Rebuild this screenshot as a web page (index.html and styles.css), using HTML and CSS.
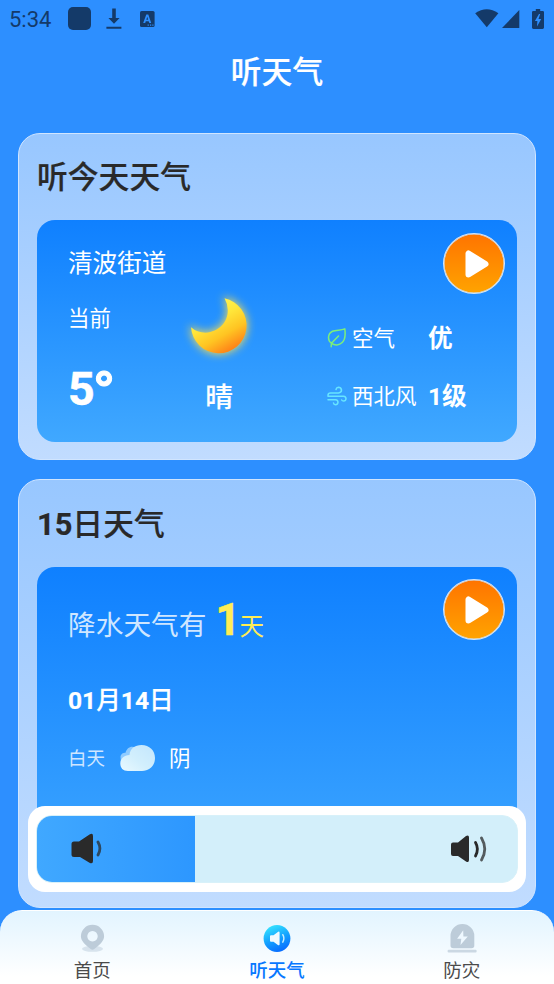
FILE: index.html
```html
<!DOCTYPE html>
<html lang="zh-CN">
<head>
<meta charset="utf-8">
<title>听天气</title>
<link rel="stylesheet" href="styles.css">
</head>
<body>
<div class="app">
  <header class="status">
    <span class="clock">5:34</span>
    <span class="app-dot"></span>
    <svg class="st-download" width="16" height="22" viewBox="0 0 16 22"><path d="M6.200 0.500h3.600v9.500h3.800L8 15.700 2.400 10h3.800zM0.400 18.700h15v2H0.400z"/></svg>
    <svg class="st-lang" width="15" height="16" viewBox="0 0 15 16"><rect width="14.600" height="16" rx="1.600"/><path class="cut" d="M3.200 12 6.300 3.600h2L11.200 12H9.300l-.6-1.700H5.800L5.200 12zM6.300 8.700h1.900l-.9-3z"/><path class="cut" d="M7.600 13.600h1.200v1.100H7.600zM10 13.600h1.200v1.100H10zM12.300 13.600h1.200v1.100h-1.200z"/></svg>
    <span class="spacer"></span>
    <svg class="st-wifi" width="24" height="19" viewBox="0 0 24 19"><path d="M0.200 4.200Q11.700-3.600 23.400 4.200L11.800 18.200z"/></svg>
    <svg class="st-cell" width="18" height="18" viewBox="0 0 18 18"><path d="M17.300 0v18H0z"/></svg>
    <svg class="st-batt" width="12" height="20" viewBox="0 0 12 20"><path d="M3.800 0h4.400v1.900h2.600Q12 1.900 12 3.200v15.400Q12 20 10.600 20H1.400Q0 20 0 18.600V3.200Q0 1.900 1.300 1.900h2.500z"/><path class="cut" d="M7 5 2.900 11.900h2.500L5 17.600 9.200 10H6.500L8.200 5z"/></svg>
  </header>
  <h1 class="title">听天气</h1>

  <main class="content">
    <section class="card today">
      <h2>听今天天气</h2>
      <div class="panel">
        <div class="panel-head">
          <span class="place">清波街道</span>
          <button class="play"><svg width="24" height="28" viewBox="0 0 24 28"><path d="M3.500 3.500v21L20.500 14z"/></svg></button>
        </div>
        <div class="weather">
          <div class="temp"><span class="label">当前</span><span class="degree">5<span class="unit">°</span></span></div>
          <div class="sky">
            <svg class="moon" width="80" height="80" viewBox="0 0 80 80">
              <defs>
                <linearGradient id="moonFill" x1="30" y1="25" x2="53" y2="65" gradientUnits="userSpaceOnUse"><stop offset="0" stop-color="#fff04a"/><stop offset=".25" stop-color="#ffe63a"/><stop offset=".62" stop-color="#ffc422"/><stop offset="1" stop-color="#ff7f17"/></linearGradient>
                <filter id="glow" x="-40%" y="-40%" width="180%" height="180%"><feGaussianBlur stdDeviation="4"/></filter>
              </defs>
              <path filter="url(#glow)" fill="#ffe14a" stroke="#ffe14a" stroke-width="2" opacity=".85" d="M44.500 13.300A27.800 27.800 0 1 1 11 42.200Q17 47.500 25.500 47.700C39 47 48 37 47.800 25Q47.500 18.500 44.500 13.300z"/>
              <path fill="url(#moonFill)" d="M44.500 13.300A27.800 27.800 0 1 1 11 42.200Q17 47.500 25.500 47.700C39 47 48 37 47.800 25Q47.500 18.500 44.500 13.300z"/>
            </svg>
            <span class="sky-name">晴</span>
          </div>
          <div class="facts">
            <div class="fact">
              <svg class="leaf" width="20" height="20" viewBox="0 0 20 20"><path d="M4.200 18.700 4.400 15.200M4.400 15.200C.3 12.600.5 5.700 5.500 3.300 9 1.600 13.500 2.700 17.800.9 18.600 6.500 18.200 11.500 15.200 14.600 12.300 17.500 7.700 17.800 4.400 15.200L11.500 8"/></svg>
              <span class="name">空气</span><span class="value">优</span>
            </div>
            <div class="fact">
              <svg class="wind" width="20" height="20" viewBox="0 0 20 20"><path d="M1 10.300V9.200Q1 7 3.500 7H11.500Q14.500 6.700 14.500 4 14 1.300 11.300 1.300 9.200 1.600 9 3.600M1 10.300H16.500Q19 10.500 19 12.800 18.800 15 16.600 15 15.200 15 14.700 14M1 13.700H8.500Q11 14 11 16.400 10.700 18.800 8.500 18.800 6.700 18.600 6.500 17"/></svg>
              <span class="name">西北风</span><span class="value">1级</span>
            </div>
          </div>
        </div>
      </div>
    </section>

    <section class="card forecast">
      <h2><b>15</b>日天气</h2>
      <div class="panel">
        <div class="panel-head">
          <span class="rain">降水天气有<b>1</b><i>天</i></span>
          <button class="play"><svg width="24" height="28" viewBox="0 0 24 28"><path d="M3.500 3.500v21L20.500 14z"/></svg></button>
        </div>
        <div class="date"><b>01</b>月<b>14</b>日</div>
        <div class="day">
          <span class="part">白天</span>
          <svg class="cloud" width="36" height="28" viewBox="0 0 36 28">
            <defs><linearGradient id="cloudFill" x1="0" y1="1" x2="1" y2="0"><stop offset="0" stop-color="#e9f9ff"/><stop offset=".45" stop-color="#d2effd"/><stop offset="1" stop-color="#c3e6fd"/></linearGradient></defs>
            <path fill="#8fcbff" d="M.5 13C.5 10 3 8.800 5.500 8.700 7 3.500 11.500 1.200 16 4L13 16 1 18z"/>
            <path fill="url(#cloudFill)" d="M8 27C3 27 .3 24 .3 19.500.3 14.500 4 11.500 9.500 11 10 4.500 15 1 21.500 1 29.500 1 35 6.500 35 14S29.500 27 22 27z"/>
          </svg>
          <span class="state">阴</span>
        </div>
      </div>
    </section>

    <div class="volume">
      <div class="track">
        <div class="level">
          <svg width="32" height="32" viewBox="0 0 32 32"><path class="horn" d="M3 8.500H8L18.500 1.500Q22 -.5 22 3V28Q22 31.500 18.500 29.800L9 24H3Q.5 24 .5 21.500V11Q.5 8.500 3 8.500z"/><path class="wave" d="M27 9Q30.800 15.500 27 22"/></svg>
        </div>
        <svg class="loud" width="38" height="30" viewBox="0 0 38 30"><path class="horn" d="M3 8.500H8L16 2Q19 .5 19 3.500V26Q19 29 16 27.500L8 22H3Q1 22 1 20V10.500Q1 8.500 3 8.500z"/><path class="wave near" d="M25.500 8.500Q29.300 15 25.500 22"/><path class="wave" d="M31.500 4Q38 15 31.500 26"/></svg>
      </div>
    </div>
  </main>

  <nav class="tabs">
    <a class="tab">
      <svg width="30" height="30" viewBox="0 0 30 30"><g transform="translate(.5 -.7)"><ellipse cx="15" cy="25.500" rx="10.500" ry="3" fill="#d7e3ed"/><path fill="#bdccd9" fill-rule="evenodd" d="M15 1.500A11.500 11.500 0 0 1 26.600 13C26.600 18 22 21.500 16.800 25.700Q15 27 13.200 25.700C8 21.500 3.400 18 3.400 13A11.500 11.500 0 0 1 15 1.500zM15 7.800a5.200 5.200 0 1 0 .01 0z"/></g></svg>
      <span>首页</span>
    </a>
    <a class="tab active">
      <svg width="30" height="30" viewBox="0 0 30 30"><defs><linearGradient id="tabFill" x1=".2" y1="0" x2=".6" y2="1"><stop offset="0" stop-color="#37e7ff"/><stop offset=".55" stop-color="#12a0ff"/><stop offset="1" stop-color="#086cff"/></linearGradient></defs><circle cx="15" cy="14.500" r="13.400" fill="url(#tabFill)"/><g transform="translate(0 -.8)"><path fill="#effaff" d="M9 12H11.500L16.200 8.500Q17.600 8 17.600 9.500V21Q17.600 22.500 16.200 22L11.500 18.500H9Q8 18.500 8 17.500V13Q8 12 9 12z"/><path d="M20.800 11.500Q23 15.200 20.800 19" fill="none" stroke="#c5eeff" stroke-width="1.500" stroke-linecap="round"/></g></svg>
      <span>听天气</span>
    </a>
    <a class="tab">
      <svg width="30" height="30" viewBox="0 0 30 30"><g transform="translate(.3 -.5)"><path fill="#bdccd9" d="M3.200 22V12.500a11.900 11.900 0 0 1 23.800 0V22Q27 24.700 24.300 24.700H6Q3.200 24.700 3.200 22z"/><rect x=".3" y="26.300" width="29" height="2.800" rx="1" fill="#cbd8e3"/><path fill="#eef8ff" d="M15.900 6.800 9.800 15.200H14L13.200 21.500 20.500 13H16.100z"/></g></svg>
      <span>防灾</span>
    </a>
  </nav>
</div>
</body>
</html>
```
FILE: styles.css
```css
* { box-sizing: border-box; margin: 0; padding: 0; }

body {
  background: #2d8fff;
  color: #fff;
  font-family: Roboto, "Noto Sans CJK SC", sans-serif;
}

svg { display: block; flex: none; }

.app {
  display: flex;
  flex-direction: column;
  width: 554px;
  height: 984px;
  overflow: hidden;
}

.status {
  display: flex;
  align-items: center;
  height: 37px;
  padding: 0 10px 0 9px;
  color: #143a69;
  fill: #143a69;
}
.status .cut { fill: #2d8fff; }
.clock { width: 59px; font-size: 22px; line-height: 38px; padding-top: 2px; }
.app-dot { width: 23px; height: 23px; border-radius: 5px; background: #143a69; }
.st-download { margin-left: 15px; }
.st-lang { margin-left: 18px; }
.spacer { flex: 1; }
.st-cell { margin: 1px 12px 0 3px; }

.title {
  height: 96px;
  padding-top: 13px;
  font-size: 30.800px;
  font-weight: 500;
  line-height: 46px;
  text-align: center;
  -webkit-text-stroke: 0.200px;
}

.content {
  position: relative;
  display: flex;
  flex-direction: column;
  gap: 19px;
  height: 777px;
  padding: 0 18px;
}

.card {
  padding: 19px 18px 17px;
  border: 1px solid #d0e5ff;
  border-radius: 22px;
  background: linear-gradient(#98c7ff, #c1dcff);
}
.today { height: 327px; }
.forecast { height: 429px; }

.card h2 {
  height: 67px;
  padding-top: 2px;
  color: #292929;
  font-size: 30.800px;
  font-weight: 500;
  line-height: 46px;
  -webkit-text-stroke: 0.200px;
}
.card h2 b { font-weight: 700; }
.forecast h2 { height: 68px; padding-top: 3px; }

.panel {
  height: 222px;
  padding: 13px 12px 0 31px;
  border-radius: 18px;
  background: linear-gradient(#0f80ff, #40a8ff);
}
.forecast .panel { height: 323px; }

.panel-head {
  display: flex;
  align-items: center;
  justify-content: space-between;
  height: 61px;
}
.place { padding-bottom: 6px; font-size: 24.600px; }

.play {
  display: flex;
  align-items: center;
  justify-content: center;
  width: 62px;
  height: 61px;
  padding-left: 6px;
  border: 1px solid #cfe6ff;
  border-radius: 50%;
  background: linear-gradient(#ff7300, #ffa400) border-box;
  box-shadow: inset 0 0 0 0.500px #cfe6ff;
}
.forecast .play { margin-top: -2px; }
.play path {
  fill: #fff;
  stroke: #fff;
  stroke-width: 6px;
  stroke-linejoin: round;
}

.weather { display: grid; grid-template-columns: 111px 148px 1fr; }
.temp, .sky { display: flex; flex-direction: column; }
.label { height: 49px; font-size: 21.500px; line-height: 50px; }
.degree { font-size: 46.500px; font-weight: 700; line-height: 92px; -webkit-text-stroke: 0.500px; }
.unit { margin-left: -2px; font-size: 58px; line-height: 0; vertical-align: -7px; -webkit-text-stroke: 1px; }

.sky { align-items: center; width: 80px; }
.moon { margin: -9px 0 0 2px; }
.sky-name { padding-top: 2px; font-size: 27.700px; font-weight: 500; line-height: 61px; -webkit-text-stroke: 0.200px; }

.facts { padding-top: 15px; }
.fact {
  display: grid;
  grid-template-columns: 25px 76px 1fr;
  align-items: center;
  height: 58px;
  white-space: nowrap;
}
.fact .name { padding-bottom: 3px; font-size: 21.500px; }
.fact .value { padding-bottom: 4px; font-size: 24.600px; font-weight: 700; }
.leaf, .wind { fill: none; stroke: #7bee7c; stroke-width: 1.500px; stroke-linejoin: round; stroke-linecap: round; }
.wind { stroke: #67e5ff; }

.rain { padding-top: 21px; color: #cfe6ff; font-size: 27.700px; }
.rain b { margin: 0 0 0 9px; color: #ffed55; font-size: 43.500px; line-height: 50px; -webkit-text-stroke: 0.600px; }
.rain i { margin-left: -1px; color: #ffed55; font-size: 24.600px; font-style: normal; }
.date { padding-top: 37px; font-size: 24.600px; font-weight: 500; line-height: 46px; -webkit-text-stroke: 0.200px; }
.date b { font-weight: 700; }
.day { display: flex; align-items: center; height: 66px; }
.part { width: 52px; color: #cfe6ff; font-size: 18.500px; }
.cloud { margin-top: 1px; }
.state { margin-left: 13px; padding-bottom: 1px; font-size: 21.500px; }

.volume {
  position: absolute;
  top: 673px;
  left: 28px;
  width: 498px;
  height: 86px;
  padding: 9px 8px;
  border-radius: 17px;
  background: #fff;
}
.track {
  display: flex;
  align-items: center;
  justify-content: space-between;
  height: 68px;
  padding-right: 29px;
  border: 1px solid #d8f1f9;
  border-radius: 16px;
  background: #d3effa;
  overflow: hidden;
}
.level {
  display: flex;
  align-items: center;
  width: 157.500px;
  height: 68px;
  padding-left: 34px;
  background: linear-gradient(90deg, #40a8ff, #2d97ff);
}
.horn { fill: #2a2a2a; }
.wave { fill: none; stroke: #292929; stroke-width: 2.800px; stroke-linecap: round; opacity: .75; }
.wave.near { opacity: 1; }

.tabs {
  display: grid;
  grid-template-columns: repeat(3, 1fr);
  height: 74px;
  padding-top: 13px;
  border-top: 1px solid #fff;
  border-radius: 22px 22px 0 0;
  background: linear-gradient(#e2f4ff, #fff 90%);
}
.tab {
  display: flex;
  flex-direction: column;
  align-items: center;
  color: #4a4a4a;
  font-size: 18.500px;
  line-height: 34px;
}
.tab.active { color: #0878ff; font-weight: 500; }
```
